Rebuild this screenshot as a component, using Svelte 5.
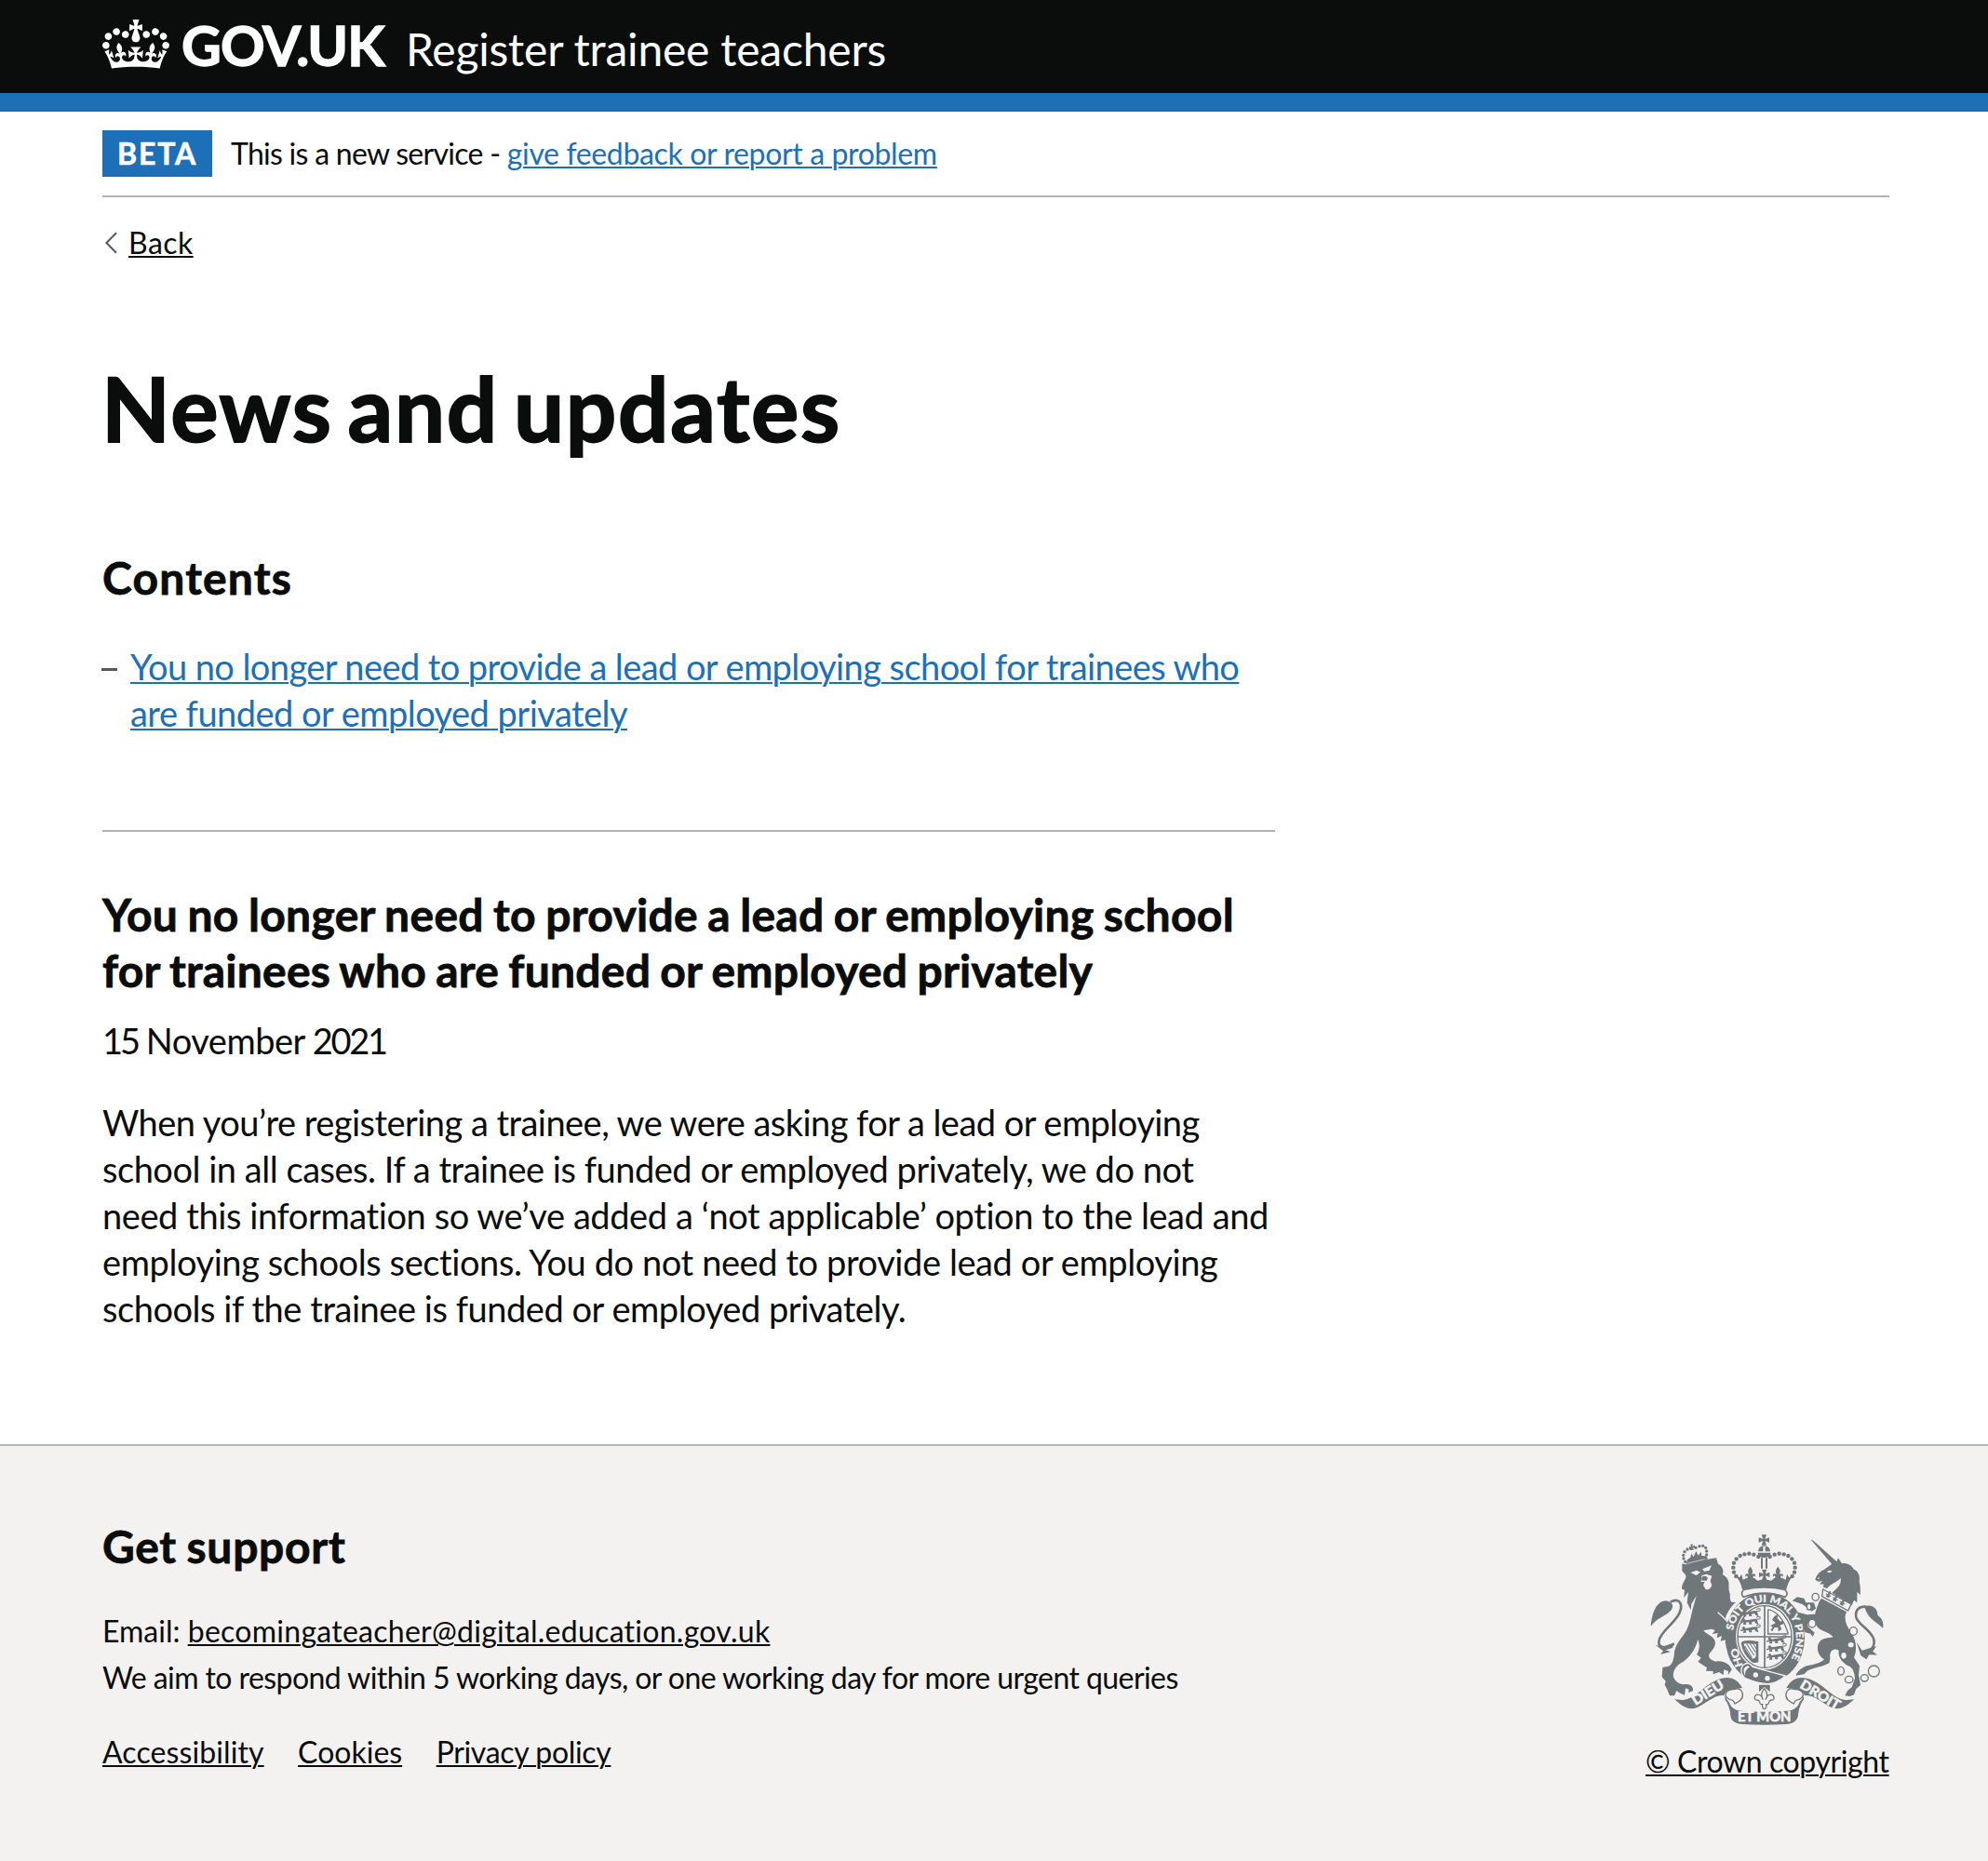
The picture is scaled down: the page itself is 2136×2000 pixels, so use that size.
<script>
  // Left half of the arched crown's pearls; the right half is mirrored.
  const pearls = [
    [449, 130], [434, 123], [419, 120], [404, 122], [390, 127],
    [378, 137], [370, 150], [368, 165], [370, 180], [377, 193]
  ];
  const smallPearls = [
    [213, 146], [208, 136], [207, 125], [211, 114], [220, 106], [231, 104],
    [247, 101], [259, 96], [270, 95], [279, 101], [282, 112], [282, 124], [279, 134]
  ];
  const links = [
    [633, 260, 11, 12], [612, 291, 7, 10], [622, 345, 12, 13], [755, 370, 12, 13],
    [715, 498, 10, 13], [741, 526, 13, 11], [791, 521, 12, 11], [821, 499, 18, 18]
  ];
  const passant = [[400, 313], [400, 339], [400, 365], [484, 400], [484, 426], [484, 452]];
</script>

<header class="header">
  <div class="container header-row">
    <svg class="crown" viewBox="0 0 132 97" aria-hidden="true">
      <path fill="#fff" d="M25 30.2c3.5 1.5 7.7-.2 9.1-3.7 1.5-3.6-.2-7.8-3.9-9.2-3.6-1.4-7.6.3-9.1 3.9-1.4 3.5.3 7.5 3.9 9zM9 39.5c3.6 1.5 7.8-.2 9.2-3.7 1.5-3.6-.2-7.8-3.9-9.1-3.6-1.5-7.6.2-9.1 3.8-1.4 3.5.3 7.5 3.8 9zM4.4 57.2c3.5 1.5 7.7-.2 9.1-3.8 1.5-3.6-.2-7.7-3.9-9.1-3.5-1.5-7.6.3-9.1 3.8-1.4 3.5.3 7.6 3.9 9.1zm38.3-21.4c3.5 1.5 7.7-.2 9.1-3.8 1.5-3.6-.2-7.7-3.9-9.1-3.6-1.5-7.6.3-9.1 3.8-1.3 3.6.4 7.7 3.9 9.1zm64.4-5.6c-3.6 1.5-7.8-.2-9.1-3.7-1.5-3.6.2-7.8 3.8-9.2 3.6-1.4 7.7.3 9.2 3.9 1.3 3.5-.4 7.5-3.9 9zm15.9 9.3c-3.6 1.5-7.7-.2-9.1-3.7-1.5-3.6.2-7.8 3.7-9.1 3.6-1.5 7.7.2 9.2 3.8 1.5 3.5-.3 7.5-3.8 9zm4.7 17.7c-3.6 1.5-7.8-.2-9.2-3.8-1.5-3.6.2-7.7 3.9-9.1 3.6-1.5 7.7.3 9.2 3.8 1.3 3.5-.4 7.6-3.9 9.1zM89.3 35.8c-3.6 1.5-7.8-.2-9.2-3.8-1.4-3.6.2-7.7 3.9-9.1 3.6-1.5 7.7.3 9.2 3.8 1.4 3.6-.3 7.7-3.9 9.1zM69.7 17.7l8.9 4.7V9.3l-8.9 2.8c-.2-.3-.5-.6-.9-.9L72.4 0H59.6l3.5 11.2c-.3.3-.6.5-.9.9l-8.8-2.8v13.1l8.8-4.7c.3.3.6.7.9.9l-5 15.4v.1c-.2.8-.4 1.6-.4 2.4 0 4.1 3.1 7.5 7 8.1h.2c.3 0 .7.1 1 .1.4 0 .7 0 1-.1h.2c4-.6 7.1-4.1 7.1-8.1 0-.8-.1-1.7-.4-2.4V34l-5.1-15.4c.4-.2.7-.6 1-.9zM66 92.8c16.9 0 32.8 1.1 47.1 3.2 4-16.9 8.9-26.7 14-33.5l-9.6-3.4c1 4.9 1.1 7.2 0 10.2-1.5-1.4-3-4.3-4.2-8.7L108.6 76c2.8-2 5-3.2 7.5-3.3-4.4 9.4-10 11.9-13.6 11.2-4.3-.8-6.3-4.6-5.6-7.9 1-4.7 5.7-5.9 8-.5 4.3-8.7-3-11.4-7.6-8.8 7.1-7.2 7.9-13.5 2.1-21.1-8 6.1-8.1 12.3-4.5 20.8-4.7-5.4-12.1-2.5-9.5 6.2 3.4-5.2 7.9-2 7.2 3.1-.6 4.3-6.4 7.8-13.5 7.2-10.3-.9-10.9-8-11.2-13.8 2.5-.5 7.1 1.8 11 7.3L80.2 60c-4.1 4.4-8 5.3-12.3 5.4 1.4-4.4 8-11.6 8-11.6H55.5s6.4 7.2 7.9 11.6c-4.2-.1-8-1-12.3-5.4l1.4 16.4c3.9-5.5 8.5-7.7 10.9-7.3-.3 5.8-.9 12.8-11.1 13.8-7.2.6-12.9-2.9-13.5-7.2-.7-5 3.8-8.3 7.1-3.1 2.7-8.7-4.6-11.6-9.4-6.2 3.7-8.5 3.6-14.7-4.6-20.8-5.8 7.6-5 13.9 2.2 21.1-4.7-2.6-11.9.1-7.7 8.8 2.3-5.5 7.1-4.2 8.1.5.7 3.3-1.3 7.1-5.7 7.9-3.5.7-9-1.8-13.5-11.2 2.5.1 4.7 1.3 7.5 3.3l-4.7-15.4c-1.2 4.4-2.7 7.2-4.3 8.7-1.1-3-.9-5.3 0-10.2l-9.5 3.4c5 6.9 9.9 16.7 14 33.5 14.8-2.1 30.8-3.2 47.7-3.2z" />
    </svg>
    <span class="logotype">GOV.UK</span>
    <span class="service">Register trainee teachers</span>
  </div>
</header>

<div class="container">
  <div class="phase">
    <strong class="tag">BETA</strong>
    <span class="phase-text">This is a new service -&nbsp;</span><a class="link feedback" href="#feedback">give feedback or report a problem</a>
  </div>

  <div class="back-row">
    <svg class="chevron" viewBox="0 0 14 24" aria-hidden="true">
      <path d="M13 1.2 2.4 12 13 22.8" fill="none" stroke="#505a5f" stroke-width="2" />
    </svg>
    <a class="back" href="#back">Back</a>
  </div>

  <main class="main">
    <h1>News and updates</h1>
    <h2 class="contents-title">Contents</h2>
    <ul class="contents">
      <li>
        <span class="dash"></span>
        <a class="link" href="#article">
          <span class="line t58">You no longer need to provide a lead or employing school for trainees who</span>
          <span class="line t53">are funded or employed privately</span>
        </a>
      </li>
    </ul>
    <hr />
    <h2 class="article-title" id="article">
      <span class="line">You no longer need to provide a lead or employing school</span>
      <span class="line second">for trainees who are funded or employed privately</span>
    </h2>
    <p class="date"><span class="day">15</span> November <span class="year">2021</span></p>
    <p class="body">
      <span class="line t54">When you’re registering a trainee, we were asking for a lead or employing</span>
      <span class="line t48">school in all cases. If a trainee is funded or employed privately, we do not</span>
      <span class="line t41">need this information so we’ve added a ‘not applicable’ option to the lead and</span>
      <span class="line t41">employing schools sections. You do not need to provide lead or employing</span>
      <span class="line t46">schools if the trainee is funded or employed privately.</span>
    </p>
  </main>
</div>

<footer class="footer">
  <div class="container footer-row">
    <div class="support">
      <h2>Get support</h2>
      <p>Email: <a class="email" href="#email">becomingateacher@digital.education.gov.uk</a></p>
      <p class="line t57">We aim to respond within 5 working days, or one working day for more urgent queries</p>
      <nav>
        <a class="acc" href="#accessibility">Accessibility</a>
        <a href="#cookies">Cookies</a>
        <a class="priv" href="#privacy">Privacy policy</a>
      </nav>
    </div>
    <div class="copyright">
      <svg class="crest" viewBox="100 55 755 620" aria-hidden="true">
        <defs>
          <path id="motto" d="M367 434 C350 340 400 276 470 276 C530 276 571 330 571 388 C571 440 550 480 515 504 L490 512" />
          <g id="fleur">
            <path d="M0 -22 C-9 -12 -9 -4 -3 5 C-9 -2 -19 0 -16 11 C-13 6 -8 7 -9 13 L-12 20 H12 L9 13 C8 7 13 6 16 11 C19 0 9 -2 3 5 C9 -4 9 -12 0 -22Z" />
          </g>
          <g id="pattee">
            <path d="M-8 -17 H8 L3 -3 L17 -8 V8 L3 3 L8 17 H-8 L-3 3 L-17 8 V-8 L-3 -3Z" />
          </g>
          <g id="passant">
            <path d="M-6 -5 L2 -11 L8 -4 L20 -6 L38 -9 Q47 -10 46 0 L50 9 L40 6 L36 -1 L26 3 L29 9 L19 9 L18 2 L8 3 L10 10 L0 10 L1 2 L-7 6 L-9 1 L0 -2Z" />
            <path d="M44 -8 Q58 -7 54 -15 Q49 -18 42 -13" fill="none" stroke="#6f777b" stroke-width="3" />
          </g>
          <g id="ribbon">
            <path d="M178 590 L205 592 C240 588 262 560 295 538 C320 522 342 516 364 522 C380 528 390 540 397 553 L372 557 C352 558 342 566 338 578 C310 572 280 604 250 617 C222 626 204 612 178 590Z" />
            <path d="M372 557 C384 553 394 557 398 571 C401 590 386 597 373 604 C371 598 366 591 358 591 C349 587 343 580 343 574 C344 564 354 558 372 557Z" fill="#f3f2f1" stroke="#6f777b" stroke-width="4" />
            <path d="M341 578 C346 592 352 594 357 604 C357 612 367 623 380 626 L360 640 C356 620 352 605 341 590Z" />
          </g>
        </defs>
        <g fill="#6f777b">
          <!-- lion -->
          <path d="M203 152 L222 157 C244 149 269 143 293 137 L313 134 L319 153 C334 160 339 177 333 187 C349 195 356 212 353 222 C355 232 352 238 358 250 C356 262 358 270 362 276 L376 277 C362 289 350 305 342 329 C360 346 378 370 380 386 L380 409 L366 406 L360 418 L354 404 L342 411 L343 398 L327 402 L331 385 L315 392 L318 376 L300 379 L309 367 L298 363 L272 368 C280 380 302 384 309 402 C313 420 300 431 291 443 C285 456 298 464 312 468 C333 463 356 474 363 494 L351 512 L352 499 L338 494 L336 511 L322 502 L303 509 L303 499 L280 498 L283 488 L268 478 L254 468 L264 456 L250 445 C260 430 260 410 254 397 C248 424 229 455 202 471 C183 481 172 499 175 518 C180 531 190 539 205 542 C226 537 242 547 237 563 L223 568 L225 558 L214 554 L211 576 L197 570 L185 562 L178 578 L163 578 L154 556 L147 543 L150 531 L138 518 L140 487 L158 483 C173 480 177 456 178 436 C185 406 203 392 215 371 C230 343 231 319 239 292 L249 256 L233 282 L231 302 L219 278 L223 244 L209 262 L211 237 L202 234 C202 213 218 203 215 190 L203 176Z" />
          <path d="M230 181 L250 174 L262 180 L249 190Z M268 170 L298 158 L291 174 L275 177Z M266 191 L281 186 L299 192 L294 208 L299 223 Q292 238 279 235 L271 222 L276 211 L264 211Z" fill="#f3f2f1" />
          <path d="M266 196 Q279 187 286 199 L282 207 L266 207Z" />
          <path d="M318 309 C343 330 362 352 380 380" fill="none" stroke="#f3f2f1" stroke-width="4" />
          <path d="M215 147 L281 130 L286 140 L218 159Z M219 140 L230 132 L232 120 L240 130 L248 112 L255 126 L264 114 L266 127 L280 128 L281 134 L219 150Z" />
          <path d="M219 152 L283 136" stroke="#f3f2f1" stroke-width="2" />
          <use href="#pattee" transform="translate(235 99) scale(.55) rotate(-12)" />
          {#each smallPearls as [x, y]}
            <circle cx={x} cy={y} r="5" />
          {/each}
          <path d="M165 276 C192 261 204 280 198 302 C190 340 135 365 128 402 C126 426 150 427 177 411" fill="none" stroke="#6f777b" stroke-width="8" />
          <path d="M102 354 C105 311 120 276 148 272 C165 273 180 283 168 302 C152 322 123 326 102 354Z M117 414 L138 421 L178 407 L172 424 L150 431 L166 437 L133 445 L142 434Z" />

          <!-- unicorn -->
          <path d="M617 74 L626 78 L703 147 L689 158Z" />
          <path d="M686 153 L700 148 L706 134 L718 152 C734 147 754 161 756 171 C770 173 778 193 774 210 C779 228 777 239 778 253 L767 244 L767 278 L757 270 L750 287 L736 277 L686 246 C702 232 718 220 714 199 C699 214 681 218 670 232 L658 228 L659 218 L646 219 L655 208 L642 210 L632 204 C636 191 644 178 660 172Z" />
          <path d="M669 178 Q680 171 687 177 L678 182Z M638 200 L646 196 L644 202Z" fill="#f3f2f1" />
          <path d="M657 235 L748 283 L738 304 L654 258Z" fill="#f3f2f1" stroke="#6f777b" stroke-width="4" />
          <use href="#fleur" transform="translate(676 251) rotate(27) scale(.55)" />
          <use href="#fleur" transform="translate(698 263) rotate(27) scale(.55)" />
          <use href="#fleur" transform="translate(721 276) rotate(27) scale(.55)" />
          <path d="M652 264 L733 308 C722 331 733 351 747 374 C767 400 766 433 757 455 L775 482 L772 510 L778 544 L764 556 L757 575 L744 580 L728 578 L736 562 L750 550 L760 522 C758 500 753 487 737 481 C717 470 705 452 708 432 C690 421 677 435 680 457 L678 472 C655 485 630 487 608 497 L596 509 L569 513 C576 496 592 485 608 481 C630 478 651 472 661 461 C639 449 632 418 649 401 C662 390 681 392 690 389 C672 369 641 369 635 350 C619 339 602 339 609 356 L630 375 L624 388 L617 378 L599 374 L590 350 C584 331 576 324 566 326 L561 318 L578 309 L605 317 L631 315 C637 295 643 274 652 264Z" />
          <path d="M558 272 L574 260 L596 264 L602 278 L628 278 L634 297 L620 306 L607 295 L590 283Z M576 326 L588 330 L601 356 L590 366 L574 341Z" />
          {#each links as [x, y, rx, ry]}
            <ellipse cx={x} cy={y} {rx} {ry} fill="#f3f2f1" stroke="#6f777b" stroke-width="4" />
          {/each}
          <ellipse cx="747" cy="414" rx="9" ry="8" fill="#f3f2f1" />
          <ellipse cx="724" cy="449" rx="8" ry="10" fill="#f3f2f1" />
          <path d="M796 291 C773 289 760 302 764 325 C770 350 812 365 821 397 C825 418 811 434 789 441" fill="none" stroke="#6f777b" stroke-width="8" />
          <path d="M790 290 C815 281 834 297 833 318 C848 329 854 341 850 361 C836 341 804 338 790 290Z M765 405 L783 432 L829 418 L818 435 L832 447 L806 446 L797 461 L779 449Z" />

          <!-- crown -->
          <use href="#pattee" x="467" y="76" />
          <path d="M448 113 Q449 97 467 95 Q486 97 487 113 H471 V97 H464 V113Z M446 117 H489 Q486 132 467 133 Q449 132 446 117Z M457 134 H463 V168 H457Z M472 134 H478 V168 H472Z" />
          {#each pearls as [x, y]}
            <circle cx={x} cy={y} r="6.6" />
            <circle cx={935 - x} cy={y} r="6.6" />
          {/each}
          <use href="#pattee" x="468" y="188" />
          <use href="#fleur" x="423" y="184" />
          <use href="#fleur" x="512" y="184" />
          <path d="M375 190 L388 197 L395 186 L399 204 L412 198 L423 203 L436 199 L446 207 L468 202 L490 207 L500 199 L512 203 L524 198 L537 204 L541 186 L548 197 L561 190 C549 205 543 218 539 236 Q468 222 397 236 C393 218 387 205 375 190Z" />

          <!-- garter and shield -->
          <ellipse cx="470" cy="391" rx="128" ry="146" />
          <ellipse cx="469" cy="388" rx="93" ry="106" fill="#f3f2f1" />
          <ellipse cx="469" cy="388" rx="87" ry="100" fill="none" stroke="#6f777b" stroke-width="4" />
          <path d="M402 236 Q468 222 534 236 Q548 248 535 260 Q468 234 401 260 Q389 248 402 236Z" fill="#f3f2f1" stroke="#6f777b" stroke-width="5" />
          <path d="M469 288 V488 M382 388 H556" stroke="#6f777b" stroke-width="5" />
          {#each passant as [x, y]}
            <use href="#passant" {x} {y} />
          {/each}
          <path d="M480 300 V379 H545 M480 300 Q525 310 545 379" fill="none" stroke="#6f777b" stroke-width="4" />
          <path d="M488 352 L504 344 L493 333 L501 321 L512 316 L510 329 L520 339 L528 335 L530 346 L518 352 L524 364 L513 371 L512 358 L500 359 L494 371 L488 366 L495 358Z" />
          <path d="M393 407 Q405 395 449 404 V470 Q431 477 421 462 Q397 440 393 407Z M402 410 Q406 434 430 459 Q440 457 441 451 V411Z" fill-rule="evenodd" />
          <path d="M411 411 L435 448 M421 409 L440 438 M431 409 L442 426 M405 418 L428 455" stroke="#6f777b" stroke-width="3" />
          <text class="motto"><textPath href="#motto" startOffset="66" textLength="392" lengthAdjust="spacingAndGlyphs">SOIT QUI MAL Y PENSE</textPath></text>
          <text class="motto" transform="translate(398 482) rotate(-107)" textLength="62" lengthAdjust="spacingAndGlyphs">HO</text>
          <path d="M399 480 Q418 465 430 485 Q475 498 536 514 Q510 538 478 540 Q440 537 405 520 Q385 500 399 480Z" stroke="#f3f2f1" stroke-width="4" />
          <path d="M400 490 Q414 472 424 485 Q402 499 410 518 Q397 512 400 490Z" fill="#f3f2f1" stroke="#6f777b" stroke-width="4" />
          <circle cx="440" cy="511" r="8" fill="#f3f2f1" />
          <circle cx="478" cy="522" r="8" fill="#f3f2f1" />

          <!-- pendant and ribbon -->
          <path d="M451 543 H486 V566 L468 550 L451 566Z" />
          <path d="M468 555 C456 570 459 584 464 591 C458 569 434 570 437 588 C441 596 447 588 452 596 C456 602 450 607 462 606 Q460 620 468 621 Q476 620 474 606 C486 607 480 602 484 596 C489 588 495 596 499 588 C502 570 478 569 472 591 C477 584 480 570 468 555Z" fill="#f3f2f1" stroke="#6f777b" stroke-width="4" />
          <use href="#ribbon" />
          <use href="#ribbon" transform="translate(936 0) scale(-1 1)" />
          <path d="M357 604 C364 624 384 627 405 628 Q468 632 530 628 C552 627 573 622 579 604 L577 642 C573 660 560 668 537 670 Q467 674 400 670 C376 668 361 660 359 642Z" />
          <text class="scroll" transform="translate(246 610) rotate(-32)" textLength="112" lengthAdjust="spacingAndGlyphs">DIEU</text>
          <text class="scroll" transform="translate(580 551) rotate(31)" textLength="142" lengthAdjust="spacingAndGlyphs">DROIT</text>
          <text class="scroll" x="382" y="662" textLength="172" lengthAdjust="spacingAndGlyphs">ET MON</text>
        </g>
      </svg>
      <a class="crown-link" href="#copyright">© Crown copyright</a>
    </div>
  </div>
</footer>

<style>
  :global(body) {
    margin: 0;
    background: #fff;
    color: #0b0c0c;
    font-family: Lato, 'Liberation Sans', sans-serif;
  }

  h1, h2, p, ul { margin: 0; padding: 0; }
  h1, h2 { font-weight: 700; }

  a {
    color: #0b0c0c;
    text-decoration: underline;
    text-decoration-thickness: 2px;
    text-underline-offset: 2px;
  }

  .link { color: #1d70b8; }
  .container { width: 1920px; margin: 0 auto 0 110px; }
  .line { display: block; white-space: nowrap; }

  /* Per-line tracking */
  .t41 { letter-spacing: -0.41px; }
  .t46 { letter-spacing: -0.46px; }
  .t48 { letter-spacing: -0.48px; }
  .t53 { letter-spacing: -0.53px; }
  .t54 { letter-spacing: -0.54px; }
  .t57 { letter-spacing: -0.57px; }
  .t58 { letter-spacing: -0.58px; }

  .header {
    height: 100px;
    background: #0b0c0c;
    border-bottom: 20px solid #1d70b8;
    color: #fff;
  }
  .header-row { display: flex; align-items: baseline; white-space: nowrap; }
  .crown { width: 72px; height: 53px; align-self: flex-start; margin-top: 21px; }
  .logotype {
    width: 241px;
    margin-left: 13px;
    padding-top: 14px;
    font-size: 59px;
    line-height: 70px;
    font-weight: 700;
    letter-spacing: -0.9px;
    -webkit-text-stroke: 1.4px #fff;
  }
  .service { font-size: 48px; letter-spacing: -0.2px; }

  .phase {
    display: flex;
    padding: 20px 0;
    border-bottom: 2px solid #b1b4b6;
    font-size: 32px;
    line-height: 49px;
    white-space: nowrap;
  }
  .tag {
    box-sizing: border-box;
    width: 118px;
    height: 50px;
    margin-right: 20px;
    padding-left: 16px;
    background: #1d70b8;
    color: #fff;
    letter-spacing: 1.9px;
    -webkit-text-stroke: 0.6px #fff;
  }
  .phase-text { letter-spacing: -0.72px; }
  .feedback { letter-spacing: -0.36px; }

  .back-row { display: flex; align-items: center; margin-top: 28px; font-size: 32px; line-height: 42px; }
  .chevron { width: 14px; height: 24px; margin: 0 12px 0 2px; }
  .back { letter-spacing: 0.45px; }

  .main { width: 1260px; height: 1164px; padding-top: 106px; font-size: 38px; line-height: 50px; }
  h1 {
    margin-left: -1px;
    font-size: 96px;
    line-height: 100px;
    letter-spacing: 1.7px;
    word-spacing: -9px;
    -webkit-text-stroke: 1.8px #0b0c0c;
  }
  h2 {
    font-size: 48px;
    line-height: 60px;
    letter-spacing: 0.3px;
    word-spacing: -1.7px;
    -webkit-text-stroke: 0.8px #0b0c0c;
  }
  .second { letter-spacing: 0.22px; }
  .contents-title { margin-top: 103px; letter-spacing: 1.2px; }
  .contents { margin-top: 40px; list-style: none; }
  .contents li { display: flex; }
  .dash { width: 17px; height: 3px; margin: 27px 14px 0 -1px; background: #505a5f; }
  hr { height: 2px; margin: 101px 0 59px; border: 0; background: #b1b4b6; }
  .date { margin-top: 20px; letter-spacing: -0.5px; word-spacing: -0.5px; }
  .day { letter-spacing: -3px; }
  .year { letter-spacing: -2.3px; }
  .body { margin-top: 38px; }

  .footer { height: 446px; border-top: 2px solid #b1b4b6; background: #f3f2f1; font-size: 32px; line-height: 50px; }
  .footer-row { display: flex; justify-content: space-between; }
  .support { padding-top: 78px; }
  .support h2 { margin-bottom: 36px; letter-spacing: 0.7px; }
  .email { letter-spacing: 0.27px; }
  nav { display: flex; gap: 36.5px; margin-top: 30px; }
  .acc { letter-spacing: 0.1px; }
  .priv { letter-spacing: -0.35px; }
  .copyright { width: 262px; padding-top: 94px; white-space: nowrap; }
  .crest { display: block; width: 251.7px; height: 206.7px; margin: 0 0 13px 5px; }
  .crown-link { letter-spacing: -0.4px; }

  .motto, .scroll {
    fill: #f3f2f1;
    stroke: #f3f2f1;
    stroke-width: 1.2px;
    font-weight: 700;
    font-family: Lato, sans-serif;
  }
  .motto { font-size: 32px; }
  .scroll { font-size: 43px; stroke-width: 2px; }
</style>
